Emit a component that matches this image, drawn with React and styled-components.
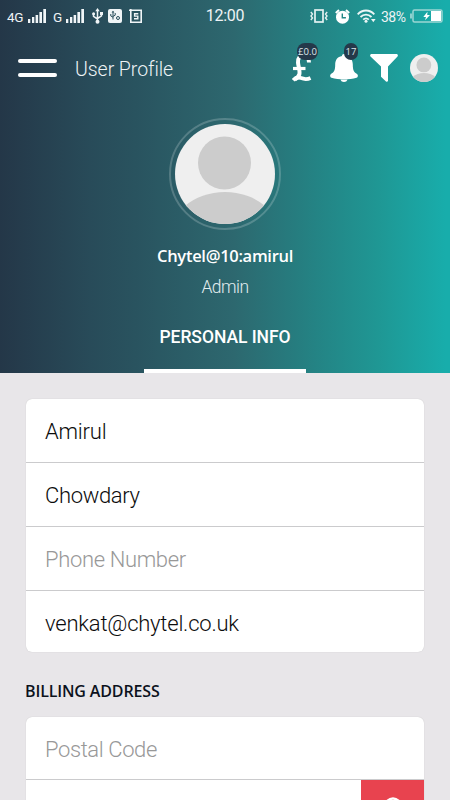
import React from 'react';

import styled, { createGlobalStyle } from 'styled-components';

const white = '#ffffff';
const navy = '#25394a';
const pageGrey = '#e8e6e9';
const red = '#e8434f';

const GlobalStyle = createGlobalStyle`
    * {
        box-sizing: border-box;
    }

    body {
        margin: 0;
        background: ${pageGrey};
        font-family: Roboto, 'Open Sans', sans-serif;
    }
`;

const Screen = styled.div`
    width: 450px;
    height: 800px;
    overflow: hidden;
    background: ${pageGrey};
`;

const Header = styled.header`
    height: 373px;
    display: flex;
    flex-direction: column;
    align-items: center;
    color: ${white};
    background: linear-gradient(
        90deg,
        #243748 0%,
        #284b59 20%,
        #29535f 30%,
        #2d686f 52%,
        #248384 70%,
        #1f9794 84%,
        #18adab 99%
    );

    > * {
        flex-shrink: 0;
    }
`;

const StatusBar = styled.div`
    width: 100%;
    height: 32px;
    display: grid;
    grid-template-columns: 1fr 50px 1fr;
    align-items: center;
    padding: 0 7px;
`;

const StatusGroup = styled.div`
    display: flex;
    align-items: center;
    justify-content: ${(props) => (props.$end ? 'flex-end' : 'flex-start')};

    svg {
        flex: none;
        display: block;
    }
`;

const StatusText = styled.span`
    flex: none;
    width: ${(props) => props.$width}px;
    margin-right: ${(props) => props.$gap || 0}px;
    font-size: ${(props) => props.$size || 13.5}px;
    letter-spacing: ${(props) => props.$spacing || 0}px;
    line-height: 16px;
    padding-top: 1px;
    white-space: nowrap;
    color: #eef3f5;
`;

const Clock = styled.span`
    font-size: 16px;
    letter-spacing: -0.3px;
    line-height: 18px;
    text-align: center;
    color: #eef3f5;
`;

const Spacer = styled.span`
    flex: none;
    width: ${(props) => props.$width}px;
`;

const AppBar = styled.div`
    width: 100%;
    height: 72px;
    display: flex;
    align-items: center;
    padding: 0 12px 0 18px;
`;

const MenuButton = styled.div`
    width: 39px;
    height: 18px;
    display: flex;
    flex-direction: column;
    justify-content: space-between;
    margin-right: 18px;

    span {
        height: 4px;
        border-radius: 2px;
        background: ${white};
    }
`;

const Title = styled.h1`
    flex: 1;
    margin: 0;
    padding-top: 3px;
    font-size: 19.5px;
    font-weight: 300;
    line-height: 24px;
    letter-spacing: -0.05px;
    color: #eef3f5;
`;

const Actions = styled.div`
    display: flex;
    align-items: center;
`;

const Action = styled.div`
    position: relative;
    height: 28px;
    margin-right: ${(props) => props.$gap || 0}px;

    svg {
        display: block;
    }
`;

const Badge = styled.span`
    position: absolute;
    top: -11px;
    left: ${(props) => props.$left}px;
    width: ${(props) => props.$width}px;
    height: 17px;
    border-radius: 8px;
    background: ${navy};
    font-family: 'Open Sans', sans-serif;
    font-size: 9.5px;
    line-height: 18px;
    text-align: center;
    color: #dfe6ea;
`;

const AvatarRing = styled.div`
    width: 112px;
    height: 112px;
    margin-top: 14px;
    padding: 4px;
    border: 2px solid rgba(255, 255, 255, 0.2);
    border-radius: 50%;

    svg {
        display: block;
    }
`;

const UserName = styled.div`
    margin-top: 14px;
    font-family: 'Open Sans', sans-serif;
    font-size: 16.5px;
    font-weight: 600;
    line-height: 24px;
    letter-spacing: -0.3px;
`;

const Role = styled.div`
    margin-top: 7px;
    font-size: 17.5px;
    font-weight: 300;
    line-height: 24px;
    letter-spacing: -0.5px;
    color: #e3ecee;
`;

const Tab = styled.div`
    width: 162px;
    height: 74px;
    margin-top: auto;
    padding-top: 26px;
    border-bottom: 4px solid ${white};
    font-size: 17.5px;
    font-weight: 500;
    line-height: 24px;
    letter-spacing: -0.05px;
    text-align: center;
    white-space: nowrap;
`;

const Content = styled.main`
    padding: 26px 26px 0;
`;

const Card = styled.section`
    overflow: hidden;
    border-radius: 6px;
    background: ${white};
    box-shadow: 0 0 1px rgba(0, 0, 0, 0.2);
`;

const Field = styled.div`
    height: ${(props) => props.$height || 64}px;
    display: flex;
    align-items: center;
    padding: ${(props) => (props.$last ? 4 : 2)}px 0 0 19px;
    border-bottom: ${(props) => (props.$last ? 'none' : '1px solid #cbcbcd')};
    font-size: 22px;
    font-weight: 300;
    letter-spacing: ${(props) => props.$spacing || -0.35}px;
    color: ${(props) => (props.$placeholder ? '#989898' : '#0c0c0c')};
`;

const SectionTitle = styled.h2`
    margin: 27px 0 14px -1px;
    font-family: 'Open Sans', sans-serif;
    font-size: 16px;
    font-weight: 600;
    line-height: 24px;
    letter-spacing: -0.15px;
    color: #0c121c;
`;

const SearchRow = styled.div`
    height: 64px;
    display: flex;
    justify-content: flex-end;
`;

const SearchButton = styled.div`
    width: 63px;
    display: flex;
    justify-content: center;
    padding-top: 17px;
    background: ${red};
`;

const SignalIcon = () => (
    <svg width="18" height="14" viewBox="0 0 18 14" fill="#f0f5f7">
        <rect x="0" y="10" width="2.3" height="4" />
        <rect x="4" y="8" width="2.3" height="6" />
        <rect x="7.6" y="6" width="2.5" height="8" />
        <rect x="11.4" y="3" width="2.6" height="11" />
        <rect x="15.3" y="0" width="2.7" height="14" />
    </svg>
);

const UsbIcon = () => (
    <svg width="11" height="16" viewBox="0 0 11 16">
        <path
            d="M5.5 2v11M1.5 6v2.4l4 2.6M9.5 5.5v2.4l-4 2.6"
            fill="none"
            stroke="#f0f5f7"
            strokeWidth="1.5"
        />
        <path d="M3.3 3.2 5.5 0l2.2 3.2z" fill="#f0f5f7" />
        <circle cx="1.6" cy="5.8" r="1.5" fill="#f0f5f7" />
        <rect x="8" y="4" width="3" height="3" fill="#f0f5f7" />
        <circle cx="5.5" cy="13.7" r="2" fill="#f0f5f7" />
    </svg>
);

const DebugIcon = () => (
    <svg width="14" height="14" viewBox="0 0 14 14">
        <rect width="14" height="14" rx="2" fill="#f0f5f7" />
        <g fill="none" stroke="#294f5c" strokeWidth="1">
            <path d="M5 2.5v8M2.8 5v2L5 8.2M7.2 4v2.2L5 7.4" />
            <circle cx="10" cy="9" r="1.5" />
        </g>
        <path d="M3.6 3.6 5 1.8l1.4 1.8z" fill="#294f5c" />
    </svg>
);

const ScreenshotIcon = () => (
    <svg width="14" height="14" viewBox="0 0 14 14" fill="none" stroke="#f0f5f7">
        <path d="M0 1.2h13M12.2 1v12.2H1.8V0" strokeWidth="1.6" />
        <path d="M9.3 4.7H5.6v2.4h3.2v2.6H5" strokeWidth="1.4" />
    </svg>
);

const VibrateIcon = () => (
    <svg width="18" height="14" viewBox="0 0 18 14" fill="none" stroke="#e4f1f1">
        <rect x="5" y="1" width="8" height="12" strokeWidth="1.7" />
        <path d="M.8 3l1.7 2L1 7l1.500 2L.8 11M17.2 3l-1.700 2L17 7l-1.500 2 1.700 2" strokeWidth="1.4" />
    </svg>
);

const AlarmIcon = () => (
    <svg width="15" height="15" viewBox="0 0 15 15">
        <circle cx="7.5" cy="8.2" r="6.5" fill={white} />
        <path d="M.8 3.9 4 1M14.2 3.9 11 1" stroke={white} strokeWidth="2" />
        <path d="M7.3 4.6v4.2h3.6" fill="none" stroke="#238786" strokeWidth="1.4" />
    </svg>
);

const WifiIcon = () => (
    <svg width="19" height="14" viewBox="0 0 19 14">
        <g fill="none" stroke="#ecf6f6" strokeWidth="1.8">
            <path d="M.7 5.3C5.3.2 12.7.2 17.3 5.3M3.5 8c3.2-3.3 7.8-3.3 11 0M6.2 10.6c1.7-1.7 3.9-1.7 5.6 0" />
        </g>
        <circle cx="9" cy="12.3" r="1.5" fill="#ecf6f6" />
        <path d="M14 10h4.6l-2.3 3.2z" fill="#ecf6f6" />
    </svg>
);

const BatteryIcon = () => (
    <svg width="33" height="14" viewBox="0 0 33 14">
        <rect x="3" y="1" width="29" height="12" rx="1.5" fill="none" stroke="#9cd6d4" strokeWidth="1.5" />
        <path d="M1 4.5v5" stroke="#9cd6d4" strokeWidth="1.8" />
        <rect x="21" y="2" width="10" height="10" fill={white} />
        <path d="M17.5 2.8 13.3 8H16l-1 3.3L20 6h-2.8z" fill={white} />
    </svg>
);

const PoundIcon = () => (
    <svg width="20" height="28" viewBox="0 0 20 28">
        <g fill="none" stroke={white}>
            <path
                d="M17 8.5C17 4 14.5 2 11.5 2 7.5 2 5.6 4.500 6 8.500c.4 4 2.300 9 1.300 12-.6 1.900-2 3.500-4.500 5"
                strokeWidth="4"
            />
            <path d="M1 14.5h12.5" strokeWidth="3.2" />
            <path d="M1.200 26.3c2.300-2.800 5-3.300 7.800-2.200 3.500 1.400 6 1.500 9.500-.1" strokeWidth="3.8" />
        </g>
    </svg>
);

const BellIcon = () => (
    <svg width="28" height="28" viewBox="0 0 28 28" fill={white}>
        <path d="M14 0c1.3 0 2 .8 2 2 4.5.8 6.8 4 6.8 8.5 0 6.5 1.5 7.8 4.2 9.5 1.3.9 1.2 3-.5 3.800-7 2-18 2-25 0-1.700-.8-1.800-2.900-.5-3.800 2.700-1.700 4.200-3 4.200-9.500C5.2 6 7.500 2.800 12 2c0-1.200.7-2 2-2z" />
        <path d="M10.5 25.5h7c-.5 1.700-1.800 2.500-3.500 2.500s-3-.8-3.500-2.500z" />
    </svg>
);

const FunnelIcon = () => (
    <svg width="28" height="28" viewBox="0 0 28 28" fill={white}>
        <path d="M1 0h26q1.5 1 .5 2.5L18 12.5V27q-.8 1.300-2 .5l-5-4.700V12.5L.5 2.5Q-.5 1 1 0z" />
    </svg>
);

const Avatar = ({ size, id }) => (
    <svg width={size} height={size} viewBox="0 0 100 100">
        <defs>
            <clipPath id={id}>
                <circle cx="50" cy="50" r="50" />
            </clipPath>
        </defs>
        <g clipPath={`url(#${id})`}>
            <rect width="100" height="100" fill="#efefef" />
            <circle cx="49.5" cy="39" r="26.5" fill="#cccccc" />
            <ellipse cx="50" cy="118" rx="58" ry="50" fill="#cccccc" />
        </g>
    </svg>
);

const SearchIcon = () => (
    <svg width="20" height="20" viewBox="0 0 20 20" fill="none" stroke={white} strokeWidth="2.5">
        <circle cx="10" cy="9" r="7.5" />
        <path d="M15 15l4 4" />
    </svg>
);

const App = () => (
    <Screen>
        <GlobalStyle />
        <Header>
            <StatusBar>
                <StatusGroup>
                    <StatusText $width={17} $gap={4} $spacing={-0.3}>
                        4G
                    </StatusText>
                    <SignalIcon />
                    <Spacer $width={7} />
                    <StatusText $width={9} $gap={4}>
                        G
                    </StatusText>
                    <SignalIcon />
                    <Spacer $width={8} />
                    <UsbIcon />
                    <Spacer $width={5} />
                    <DebugIcon />
                    <Spacer $width={7} />
                    <ScreenshotIcon />
                </StatusGroup>
                <Clock>12:00</Clock>
                <StatusGroup $end>
                    <VibrateIcon />
                    <Spacer $width={7} />
                    <AlarmIcon />
                    <Spacer $width={7} />
                    <WifiIcon />
                    <Spacer $width={5} />
                    <StatusText $width={25} $gap={4} $size={14} $spacing={-0.5}>
                        38%
                    </StatusText>
                    <BatteryIcon />
                </StatusGroup>
            </StatusBar>
            <AppBar>
                <MenuButton>
                    <span />
                    <span />
                </MenuButton>
                <Title>User Profile</Title>
                <Actions>
                    <Action $gap={18}>
                        <PoundIcon />
                        <Badge $left={5} $width={21}>
                            £0.0
                        </Badge>
                    </Action>
                    <Action $gap={12}>
                        <BellIcon />
                        <Badge $left={14} $width={14}>
                            17
                        </Badge>
                    </Action>
                    <Action $gap={12}>
                        <FunnelIcon />
                    </Action>
                    <Action>
                        <Avatar size={28} id="small-avatar" />
                    </Action>
                </Actions>
            </AppBar>
            <AvatarRing>
                <Avatar size={100} id="large-avatar" />
            </AvatarRing>
            <UserName>Chytel@10:amirul</UserName>
            <Role>Admin</Role>
            <Tab>PERSONAL INFO</Tab>
        </Header>
        <Content>
            <Card>
                <Field $spacing={-0.2}>Amirul</Field>
                <Field>Chowdary</Field>
                <Field $placeholder>Phone Number</Field>
                <Field $last $height={61} $spacing={-0.22}>
                    venkat@chytel.co.uk
                </Field>
            </Card>
            <SectionTitle>BILLING ADDRESS</SectionTitle>
            <Card>
                <Field $placeholder $height={63} $spacing={-0.4}>
                    Postal Code
                </Field>
                <SearchRow>
                    <SearchButton>
                        <SearchIcon />
                    </SearchButton>
                </SearchRow>
            </Card>
        </Content>
    </Screen>
);

export default App;
